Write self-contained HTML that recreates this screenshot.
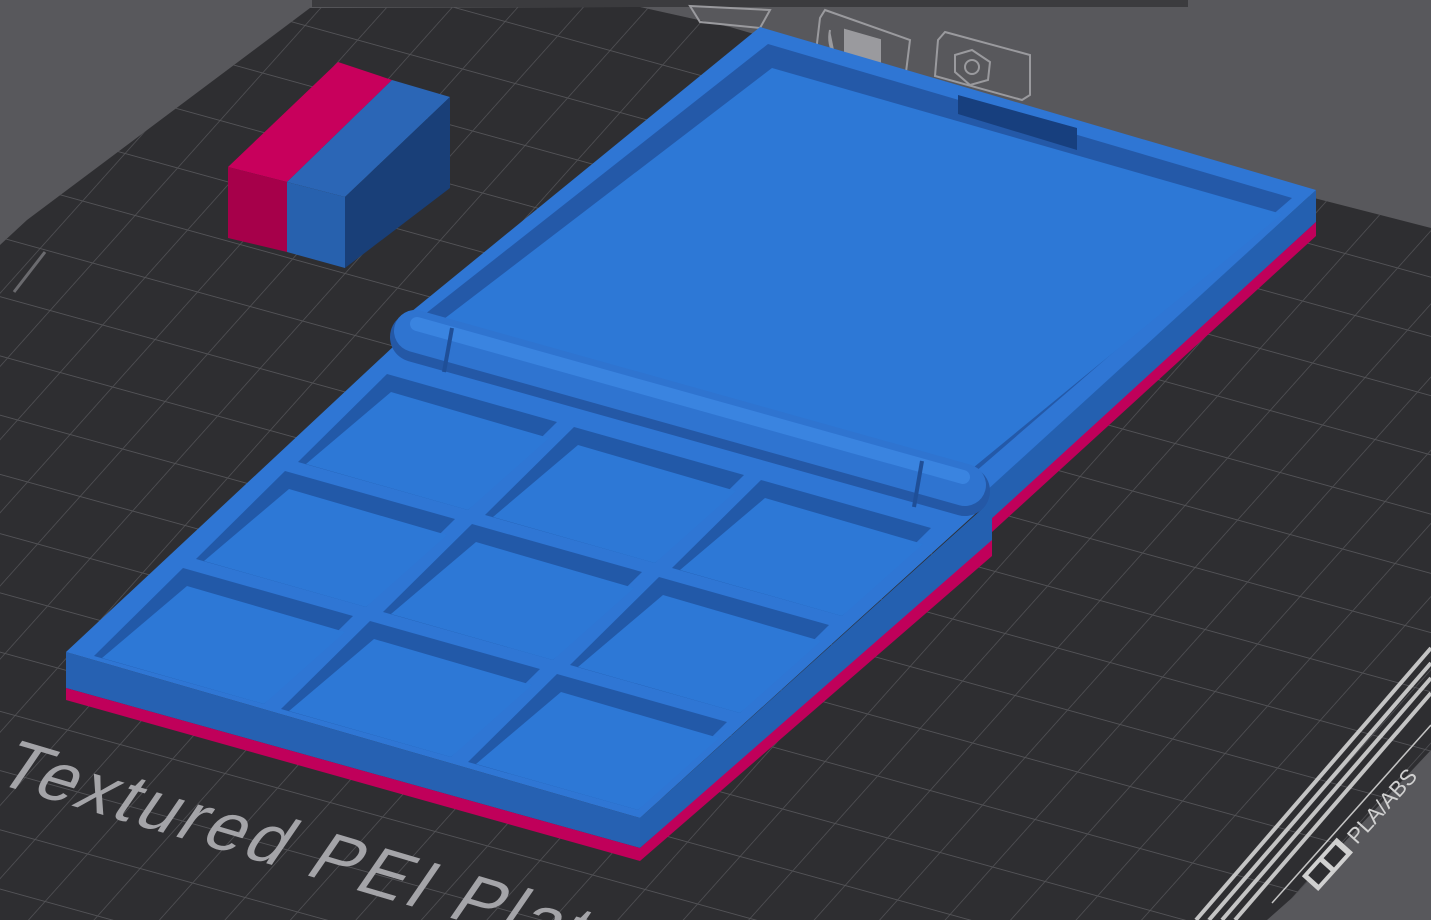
<!DOCTYPE html>
<html><head><meta charset="utf-8"><style>
html,body{margin:0;padding:0;width:1431px;height:920px;overflow:hidden;background:#58585c}
svg{display:block}
</style></head><body>
<svg width="1431" height="920" viewBox="0 0 1431 920" xmlns="http://www.w3.org/2000/svg">
<defs>
<pattern id="grid" width="50" height="50" patternUnits="userSpaceOnUse" patternTransform="matrix(1.05 0.29 -0.85 0.95 0 0)">
<path d="M0 0 H50 M0 0 V50" stroke="#535357" stroke-width="1.5" fill="none"/>
</pattern>
<clipPath id="plate"><polygon points="310,8 640,7 730,27 1314,198 1431,228 1431,750 1293,897 1267,920 0,920 0,245 27,220"/></clipPath>
</defs>
<rect width="1431" height="920" fill="#58585c"/>
<polygon points="310,8 640,7 730,27 1314,198 1431,228 1431,750 1293,897 1267,920 0,920 0,245 27,220" fill="#2e2e31"/>
<rect width="1431" height="920" fill="url(#grid)" clip-path="url(#plate)"/>
<rect x="312" y="0" width="876" height="7" fill="#3b3b3e"/>
<line x1="45" y1="252" x2="14" y2="292" stroke="#6a6a6e" stroke-width="3"/>
<g fill="none" stroke="#9a9a9e" stroke-width="2">
<polygon points="690,6 770,10 760,28 700,22"/>
<polygon points="825,10 910,40 905,80 900,88 815,60 820,18"/>
<path d="M830 30 q-3 15 5 25 M845 30 l35 10 l0 30 l-35 -10 z" fill="#9a9a9e"/>
<polygon points="945,32 1030,55 1030,95 1022,100 935,76 938,40"/>
<polygon points="955,55 972,50 990,62 988,80 970,85 955,72"/>
<circle cx="972" cy="67" r="7"/>
</g>
<g stroke="#c4c4c4" stroke-width="4">
<line x1="1431" y1="648" x2="1196" y2="920"/>
<line x1="1431" y1="663" x2="1209" y2="920"/>
<line x1="1431" y1="678" x2="1222" y2="920"/>
<line x1="1431" y1="693" x2="1235" y2="920"/>
<line x1="1431" y1="725" x2="1272" y2="903" stroke-width="1.5"/>
</g>
<g transform="translate(1316,889) rotate(-48)">
<rect x="0" y="-19" width="52" height="22" fill="#d0d0d0"/>
<rect x="5" y="-15" width="18" height="14" fill="#2e2e31"/>
<rect x="28" y="-15" width="18" height="14" fill="#2e2e31"/>
<text x="60" y="1" font-family="Liberation Sans, sans-serif" font-size="22" fill="#d0d0d0">PLA/ABS</text>
</g>
<text transform="translate(-8,782) rotate(16.5) skewX(-18)" font-family="Liberation Sans, sans-serif" font-size="70" fill="#a4a4a8" letter-spacing="4">Textured PEI Plate</text>
<polygon points="338,62 392,80 287,182 228,167" fill="#c8005c"/>
<polygon points="392,80 450,97 345,197 287,182" fill="#2b66b6"/>
<polygon points="228,167 287,182 287,252 228,238" fill="#a6004a"/>
<polygon points="287,182 345,197 345,268 287,252" fill="#2761ae"/>
<polygon points="345,197 450,97 450,188 345,268" fill="#193f78"/>
<!-- Lid -->
<polygon points="1316,190 1316,222 990,522 975,500" fill="#2460b0"/>
<polygon points="1316,222 1316,236 992,532 990,520" fill="#c0005a"/>
<polygon points="760,27 1316,190 985,492 395,325" fill="#2f76d4"/>
<polygon points="768,44 1292,198 975,472 420,318" fill="#2459a8"/>
<polygon points="772,68 1282,214 968,472 440,322" fill="#2d78d6"/>
<polygon points="958,95 1077,128 1077,150 958,114" fill="#173f7e"/>
<!-- Tray -->
<polygon points="640,818 992,500 992,545 640,848" fill="#2460b0"/>
<polygon points="640,848 992,540 992,556 640,861" fill="#c0005a"/>
<polygon points="66,652 640,818 640,848 66,688" fill="#2661b2"/>
<polygon points="66,688 640,848 640,861 66,700" fill="#c0005a"/>
<polygon points="395,345 985,505 640,818 66,652" fill="#2f76d4"/>
<g fill="#2259a8">
<polygon points="387,374 557,422 468,510 298,462"/>
<polygon points="574,427 744,475 655,563 485,515"/>
<polygon points="761,480 931,528 842,616 672,568"/>
<polygon points="285,471 455,519 366,607 196,559"/>
<polygon points="472,524 642,572 553,660 383,612"/>
<polygon points="659,577 829,625 740,713 570,665"/>
<polygon points="183,568 353,616 264,704 94,656"/>
<polygon points="370,621 540,669 451,757 281,709"/>
<polygon points="557,674 727,722 638,810 468,762"/>
</g>
<g fill="#2d78d6">
<polygon points="391,392 549,438 468,510 306,464"/>
<polygon points="578,445 736,491 655,563 493,517"/>
<polygon points="765,498 923,544 842,616 680,570"/>
<polygon points="289,489 447,535 366,607 204,561"/>
<polygon points="476,542 634,588 553,660 391,614"/>
<polygon points="663,595 821,641 740,713 578,667"/>
<polygon points="187,586 345,632 264,704 102,658"/>
<polygon points="374,639 532,685 451,757 289,711"/>
<polygon points="561,692 719,738 638,810 476,764"/>
</g>
<!-- Hinge -->
<line x1="415" y1="337" x2="965" y2="491" stroke="#2458a6" stroke-width="50" stroke-linecap="round"/>
<line x1="415" y1="331" x2="965" y2="485" stroke="#2f74d0" stroke-width="42" stroke-linecap="round"/>
<line x1="417" y1="324" x2="963" y2="477" stroke="#3a84e0" stroke-width="14" stroke-linecap="round"/>
<line x1="452" y1="328" x2="444" y2="372" stroke="#1f4f98" stroke-width="4"/>
<line x1="922" y1="461" x2="914" y2="507" stroke="#1f4f98" stroke-width="4"/>
</svg>
</body></html>
